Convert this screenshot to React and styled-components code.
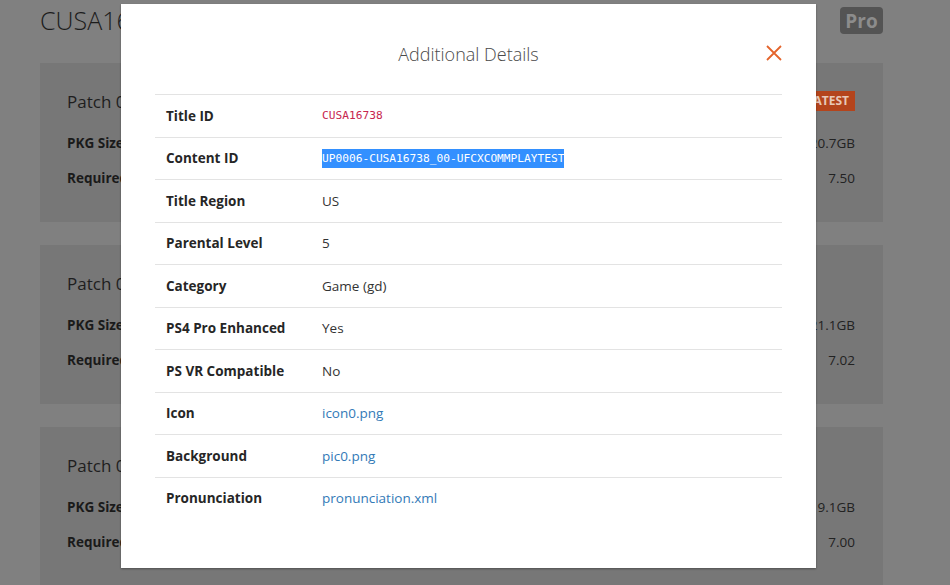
import React from "react";
import styled, { createGlobalStyle } from "styled-components";

const Global = createGlobalStyle`
  html, body { margin: 0; padding: 0; }
  body {
    background: #808080;
    font-family: "Open Sans", "Noto Sans", sans-serif;
    color: #1a1a1a;
    overflow: hidden;
  }
`;

const Page = styled.div`
  width: 950px;
  height: 585px;
  padding: 7px 67px 0 40px;
  box-sizing: border-box;
  position: relative;
  overflow: hidden;
`;

const TopBar = styled.div`
  display: flex;
  justify-content: space-between;
  align-items: center;
  height: 27px;
  margin-bottom: 29px;
`;

const GameTitle = styled.h1`
  margin: 0;
  font-size: 25px;
  font-weight: 300;
  color: #1c1c1c;
  line-height: 27px;
`;

const ProBadge = styled.span`
  display: inline-flex;
  align-items: center;
  justify-content: center;
  width: 43px;
  height: 27px;
  border-radius: 4px;
  background: #545454;
  color: #8c8c8c;
  font-weight: 700;
  font-size: 19px;
`;

const Cards = styled.div`
  display: flex;
  flex-direction: column;
  gap: 23px;
`;

const Card = styled.section`
  background: #777777;
  padding: 26px 28px 26px 27px;
  height: 159px;
  box-sizing: border-box;
`;

const CardHead = styled.div`
  display: flex;
  justify-content: space-between;
  align-items: center;
  height: 24px;
  margin-bottom: 12px;
`;

const PatchName = styled.h3`
  margin: 0;
  font-size: 17px;
  font-weight: 400;
  color: #1e1e1e;
`;

const Latest = styled.span`
  background: #b4441c;
  color: #e8c8b8;
  font-size: 12px;
  font-weight: 700;
  padding: 2px 6px;
  line-height: 16px;
`;

const InfoRow = styled.div`
  display: flex;
  justify-content: space-between;
  align-items: center;
  height: 35px;
  font-size: 13.5px;
`;

const InfoLabel = styled.span`
  font-weight: 700;
  color: #1a1a1a;
`;

const InfoValue = styled.span`
  color: #222;
`;

const Modal = styled.div`
  position: absolute;
  left: 121px;
  top: 4px;
  width: 695px;
  height: 564px;
  background: #fff;
  box-shadow: 0 1px 2px rgba(0, 0, 0, 0.35);
  padding: 30px 34px 0;
  box-sizing: border-box;
  color: #333;
`;

const ModalHeader = styled.div`
  display: grid;
  grid-template-columns: 1fr auto 1fr;
  align-items: center;
  height: 40px;
  margin-bottom: 20px;
`;

const ModalTitle = styled.h4`
  grid-column: 2;
  margin: 0;
  font-size: 18px;
  font-weight: 300;
  color: #4a4a4a;
`;

const CloseButton = styled.button`
  grid-column: 3;
  justify-self: end;
  width: 16px;
  height: 16px;
  padding: 0;
  border: 0;
  background: none;
  display: flex;
  cursor: pointer;
  margin-top: -2px;
`;

const Table = styled.table`
  width: 100%;
  border-collapse: collapse;
  table-layout: fixed;
  font-size: 13.5px;
`;

const Cell = styled.td`
  border-top: 1px solid #e3e3e3;
  padding: 10.75px 11px;
  height: 20px;
  line-height: 20px;
  vertical-align: middle;
  box-sizing: content-box;
  ${(p) => (p.$label ? "font-weight: 700; width: 134px; color: #262626;" : "color: #333;")}
`;

const Code = styled.code`
  display: inline-block;
  vertical-align: top;
  line-height: 20px;
  font-family: "DejaVu Sans Mono", monospace;
  font-size: 11.2px;
  color: #c7254e;
`;

const Selected = styled.span`
  display: inline-block;
  vertical-align: top;
  line-height: 19px;
  margin-top: 0.5px;
  font-family: "DejaVu Sans Mono", monospace;
  font-size: 11.2px;
  background: #3390ff;
  color: #fff;
`;

const Link = styled.a`
  color: #337ab7;
  text-decoration: none;
`;

const patches = [
  { name: "Patch 01.05", size: "20.7GB", fw: "7.50", latest: true },
  { name: "Patch 01.04", size: "21.1GB", fw: "7.02" },
  { name: "Patch 01.03", size: "19.1GB", fw: "7.00" },
];

const rows = [
  ["Title ID", <Code>CUSA16738</Code>],
  ["Content ID", <Selected>UP0006-CUSA16738_00-UFCXCOMMPLAYTEST</Selected>],
  ["Title Region", "US"],
  ["Parental Level", "5"],
  ["Category", "Game (gd)"],
  ["PS4 Pro Enhanced", "Yes"],
  ["PS VR Compatible", "No"],
  ["Icon", <Link href="#">icon0.png</Link>],
  ["Background", <Link href="#">pic0.png</Link>],
  ["Pronunciation", <Link href="#">pronunciation.xml</Link>],
];

export default function App() {
  return (
    <>
      <Global />
      <Page>
        <TopBar>
          <GameTitle>CUSA16738</GameTitle>
          <ProBadge>Pro</ProBadge>
        </TopBar>
        <Cards>
          {patches.map((p) => (
            <Card key={p.name}>
              <CardHead>
                <PatchName>{p.name}</PatchName>
                {p.latest && <Latest>LATEST</Latest>}
              </CardHead>
              <InfoRow>
                <InfoLabel>PKG Size</InfoLabel>
                <InfoValue>{p.size}</InfoValue>
              </InfoRow>
              <InfoRow>
                <InfoLabel>Required Firmware</InfoLabel>
                <InfoValue>{p.fw}</InfoValue>
              </InfoRow>
            </Card>
          ))}
        </Cards>
        <Modal>
          <ModalHeader>
            <ModalTitle>Additional Details</ModalTitle>
            <CloseButton aria-label="Close">
              <svg width="16" height="16" viewBox="0 0 16 16">
                <path d="M1 1 L15 15 M15 1 L1 15" stroke="#e4642c" strokeWidth="1.8" fill="none" />
              </svg>
            </CloseButton>
          </ModalHeader>
          <Table>
            <tbody>
              {rows.map(([k, v]) => (
                <tr key={k}>
                  <Cell $label>{k}</Cell>
                  <Cell>{v}</Cell>
                </tr>
              ))}
            </tbody>
          </Table>
        </Modal>
      </Page>
    </>
  );
}
